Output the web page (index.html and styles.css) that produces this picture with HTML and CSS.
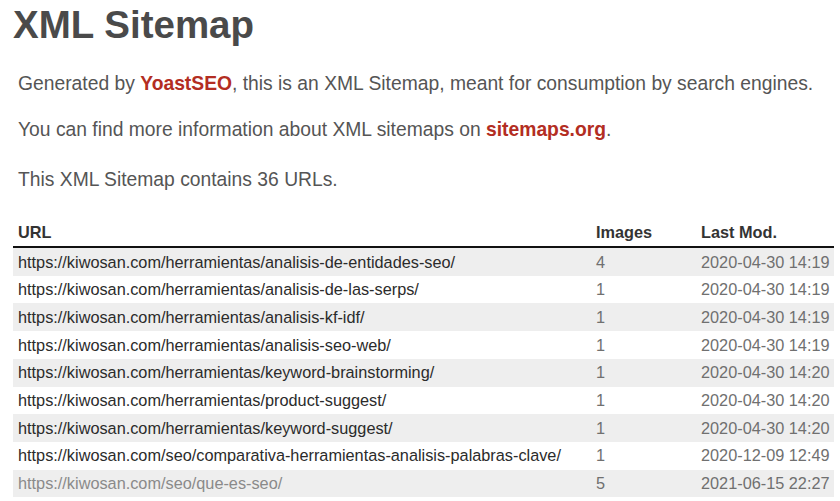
FILE: index.html
```html
<!DOCTYPE html>
<html lang="es">
<head>
<meta charset="utf-8">
<title>XML Sitemap</title>
<link rel="stylesheet" href="styles.css">
</head>
<body>
<div class="page">
  <h1 class="title">XML Sitemap</h1>
  <p class="intro intro-1">Generated by <a href="#">YoastSEO</a>, this is an XML Sitemap, meant for consumption by search engines.</p>
  <p class="intro intro-2">You can find more information about XML sitemaps on <a href="#">sitemaps.org</a>.</p>
  <p class="intro intro-3">This XML Sitemap contains 36 URLs.</p>
  <table class="sitemap">
    <colgroup>
      <col class="c-url">
      <col class="c-img">
      <col class="c-mod">
    </colgroup>
    <thead>
      <tr><th>URL</th><th>Images</th><th>Last Mod.</th></tr>
    </thead>
    <tbody>
      <tr><td>https://kiwosan.com/herramientas/analisis-de-entidades-seo/</td><td>4</td><td>2020-04-30 14:19</td></tr>
      <tr><td>https://kiwosan.com/herramientas/analisis-de-las-serps/</td><td>1</td><td>2020-04-30 14:19</td></tr>
      <tr><td>https://kiwosan.com/herramientas/analisis-kf-idf/</td><td>1</td><td>2020-04-30 14:19</td></tr>
      <tr><td>https://kiwosan.com/herramientas/analisis-seo-web/</td><td>1</td><td>2020-04-30 14:19</td></tr>
      <tr><td>https://kiwosan.com/herramientas/keyword-brainstorming/</td><td>1</td><td>2020-04-30 14:20</td></tr>
      <tr><td>https://kiwosan.com/herramientas/product-suggest/</td><td>1</td><td>2020-04-30 14:20</td></tr>
      <tr><td>https://kiwosan.com/herramientas/keyword-suggest/</td><td>1</td><td>2020-04-30 14:20</td></tr>
      <tr><td>https://kiwosan.com/seo/comparativa-herramientas-analisis-palabras-clave/</td><td>1</td><td>2020-12-09 12:49</td></tr>
      <tr class="faded"><td>https://kiwosan.com/seo/que-es-seo/</td><td>5</td><td>2021-06-15 22:27</td></tr>
    </tbody>
  </table>
</div>
</body>
</html>
```

FILE: styles.css
```css
html, body {
  margin: 0;
  padding: 0;
  background: #fff;
}
body {
  font-family: "Liberation Sans", Arial, sans-serif;
  color: #555;
}
.page {
  padding: 0 0 0 13px;
}
.title {
  margin: 3px 0 0 0;
  font-size: 38.5px;
  font-weight: bold;
  color: #4a4a4a;
  line-height: 44px;
}
.intro {
  font-size: 19.3px;
  line-height: 22px;
  margin: 0 0 0 5px;
  color: #555;
}
.intro-1 { margin-top: 26px; }
.intro-2 { margin-top: 24px; }
.intro-3 { margin-top: 28px; }
.intro a {
  color: #b32d22;
  font-weight: bold;
  text-decoration: none;
}
.sitemap {
  margin-top: 28px;
  width: 821px;
  border-collapse: collapse;
  table-layout: fixed;
  font-size: 16.3px;
}
.c-url { width: 578px; }
.c-img { width: 105px; }
.c-mod { width: 138px; }
.sitemap th {
  text-align: left;
  font-weight: bold;
  color: #333;
  padding: 4px 5px 4px 5px;
  line-height: 19px;
  border-bottom: 2px solid #111;
}
.sitemap td {
  padding: 4.5px 5px;
  line-height: 18.7px;
  color: #707070;
  white-space: nowrap;
}
.sitemap td:first-child {
  color: #2b2b2b;
}
.sitemap tbody tr:nth-child(odd) {
  background: #eeeeee;
}
.sitemap tr.faded td:first-child {
  color: #8a8a8a;
}
```
